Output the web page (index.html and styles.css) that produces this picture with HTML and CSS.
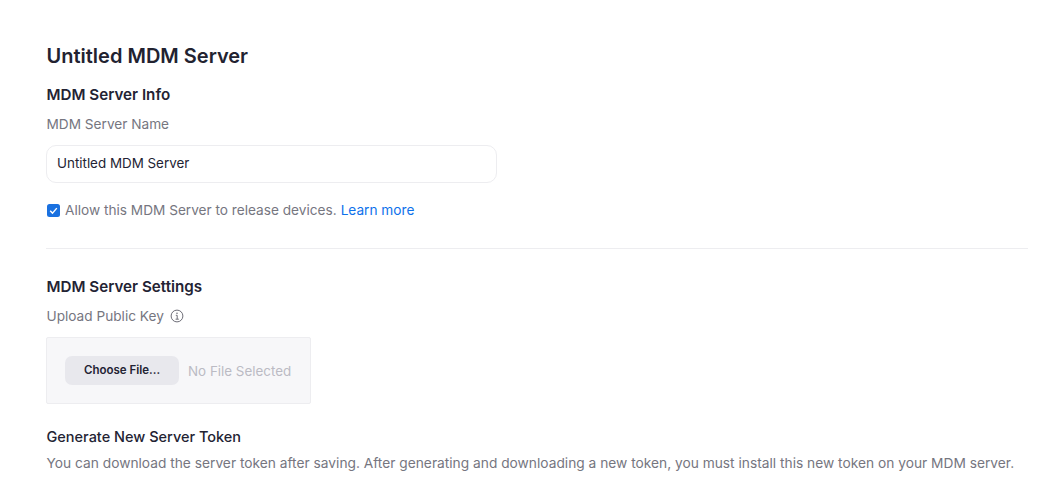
FILE: index.html
```html
<!DOCTYPE html>
<html lang="en">
<head>
<meta charset="utf-8">
<title>Untitled MDM Server</title>
<link rel="stylesheet" href="styles.css">
</head>
<body>
<main class="page">
  <h1 class="title">Untitled MDM Server</h1>
  <section class="info">
    <h2 class="heading">MDM Server Info</h2>
    <div class="label">MDM Server Name</div>
    <div class="input">Untitled MDM Server</div>
    <div class="check-row">
      <svg class="check" width="13" height="13" viewBox="0 0 13 13"><rect width="13" height="13" rx="2.5" fill="#1a71e0"/><path d="M3.2 6.7l2.3 2.4 4.3-5" fill="none" stroke="#fff" stroke-width="1.4"/></svg>
      <span>Allow this MDM Server to release devices.</span>
      <a class="link">Learn more</a>
    </div>
  </section>
  <section class="settings">
    <h2 class="heading">MDM Server Settings</h2>
    <div class="label label-icon">Upload Public Key
      <svg width="14" height="14" viewBox="0 0 14 14"><circle cx="7" cy="7" r="5.9" fill="none" stroke="#6e6e78" stroke-width="1"/><path d="M5.8 6.3H7.2V10M5.6 10.2H8.8" fill="none" stroke="#6e6e78" stroke-width="1"/><circle cx="7" cy="4.2" r=".8" fill="#6e6e78"/></svg>
    </div>
    <div class="upload">
      <div class="button">Choose File...</div>
      <span class="nofile">No File Selected</span>
    </div>
    <h3 class="subheading">Generate New Server Token</h3>
    <p class="hint">You can download the server token after saving. After generating and downloading a new token, you must install this new token on your MDM server.</p>
  </section>
</main>
</body>
</html>
```
FILE: styles.css
```css
* { box-sizing: border-box; }
html, body { margin: 0; background: #fff; }
body { font-family: Inter, "Liberation Sans", sans-serif; color: #232333; height: 484px; overflow: hidden; }
.page { padding: 42px 36px 0 46px; }
.title, .heading, .label, .subheading, .hint { padding-left: .5px; }
.title { margin: 0; font-size: 20px; line-height: 28px; font-weight: 600; color: #222230; }
.info { margin-top: 15px; padding-bottom: 28px; border-bottom: 1px solid #ededf0; }
.heading { margin: 0; font-size: 15.2px; line-height: 20px; font-weight: 600; color: #232333; }
.label { margin-top: 9px; font-size: 13.65px; line-height: 20px; color: #76767f; }
.input { margin-top: 11px; width: 451px; height: 38px; border: 1px solid #ededf0; border-radius: 10px; padding: 0 10px; font-size: 13.4px; line-height: 35px; color: #232333; }
.check-row { margin-top: 17px; display: flex; align-items: center; font-size: 13.65px; line-height: 20px; color: #76767f; }
.check { margin: 0 5px 0 1px; flex: none; }
.link { margin-left: 4px; color: #0e71eb; }
.settings { margin-top: 28px; }
.label-icon { display: flex; align-items: center; gap: 6px; }
.upload { margin-top: 11px; width: 265px; height: 67px; background: #f7f7f9; border: 1px solid #ededf0; border-radius: 2px; display: flex; align-items: center; padding-left: 18px; }
.button { width: 114px; height: 29px; background: #e8e8ed; border-radius: 7px; text-align: center; font-size: 11.5px; line-height: 29px; font-weight: 600; color: #232333; }
.nofile { margin-left: 9px; font-size: 13.4px; color: #bbbbc4; }
.subheading { margin: 23px 0 0; font-size: 14.5px; line-height: 20px; font-weight: 500; color: #232333; }
.hint { margin: 6px 0 0; font-size: 13.75px; line-height: 20px; color: #76767f; white-space: nowrap; }
```
